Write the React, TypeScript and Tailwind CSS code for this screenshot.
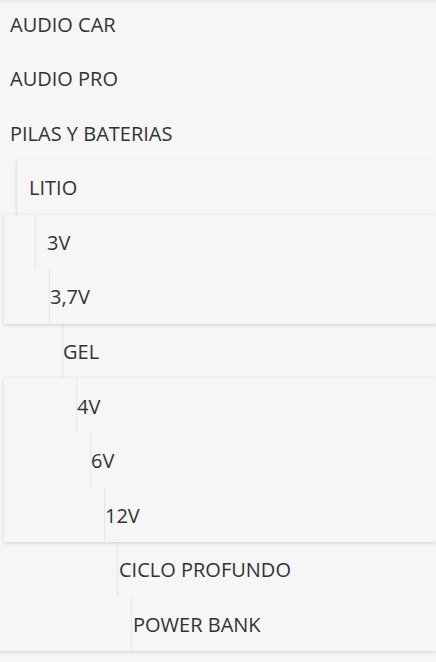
import React from 'react';

type Row = { label: string; line?: number; pad?: number; color?: string };

const Item = ({ label, line, pad = 0, color = '#e6e6e6' }: Row) => (
  <div
    className={`flex h-[54.6px] items-center pt-[2px] ${line !== undefined ? 'border-l' : ''}`}
    style={line !== undefined ? { marginLeft: line, paddingLeft: pad, borderColor: color } : { paddingLeft: 10 }}
  >
    <span>{label}</span>
  </div>
);

const pink = '#e8e1e1';

const App = () => {
  return (
    <div className="relative h-[662px] overflow-hidden bg-[#f6f6f6] font-['Open_Sans',sans-serif] text-[20px] text-[#333]">
      <div className="-mt-[3.8px] bg-[#f6f6f6] shadow-[0_1px_4px_rgba(0,0,0,0.14)]">
        <Item label="AUDIO CAR" />
        <Item label="AUDIO PRO" />
        <Item label="PILAS Y BATERIAS" />

        <div className="ml-[16px] bg-[#f6f6f6] shadow-[0_1px_3px_rgba(0,0,0,0.1)]">
          <Item label="LITIO" line={0} pad={12} color={pink} />
        </div>

        <div className="relative ml-[4px] bg-[#f6f6f6] shadow-[0_1px_4px_rgba(0,0,0,0.16)]">
          <Item label="3V" line={31} pad={11} />
          <Item label="3,7V" line={45} />
        </div>

        <Item label="GEL" line={62} color={pink} />

        <div className="relative ml-[4px] bg-[#f6f6f6] shadow-[0_1px_4px_rgba(0,0,0,0.16)]">
          <Item label="4V" line={72} />
          <Item label="6V" line={86} />
          <Item label="12V" line={100} />
        </div>

        <Item label="CICLO PROFUNDO" line={117} pad={1} color={pink} />
        <Item label="POWER BANK" line={131} pad={1} />
      </div>
      {/* faint shadow from the bar above */}
      <div className="pointer-events-none absolute inset-x-0 top-0 h-[4px] bg-gradient-to-b from-[rgba(0,0,0,0.06)] to-transparent" />
    </div>
  );
};

export default App;
